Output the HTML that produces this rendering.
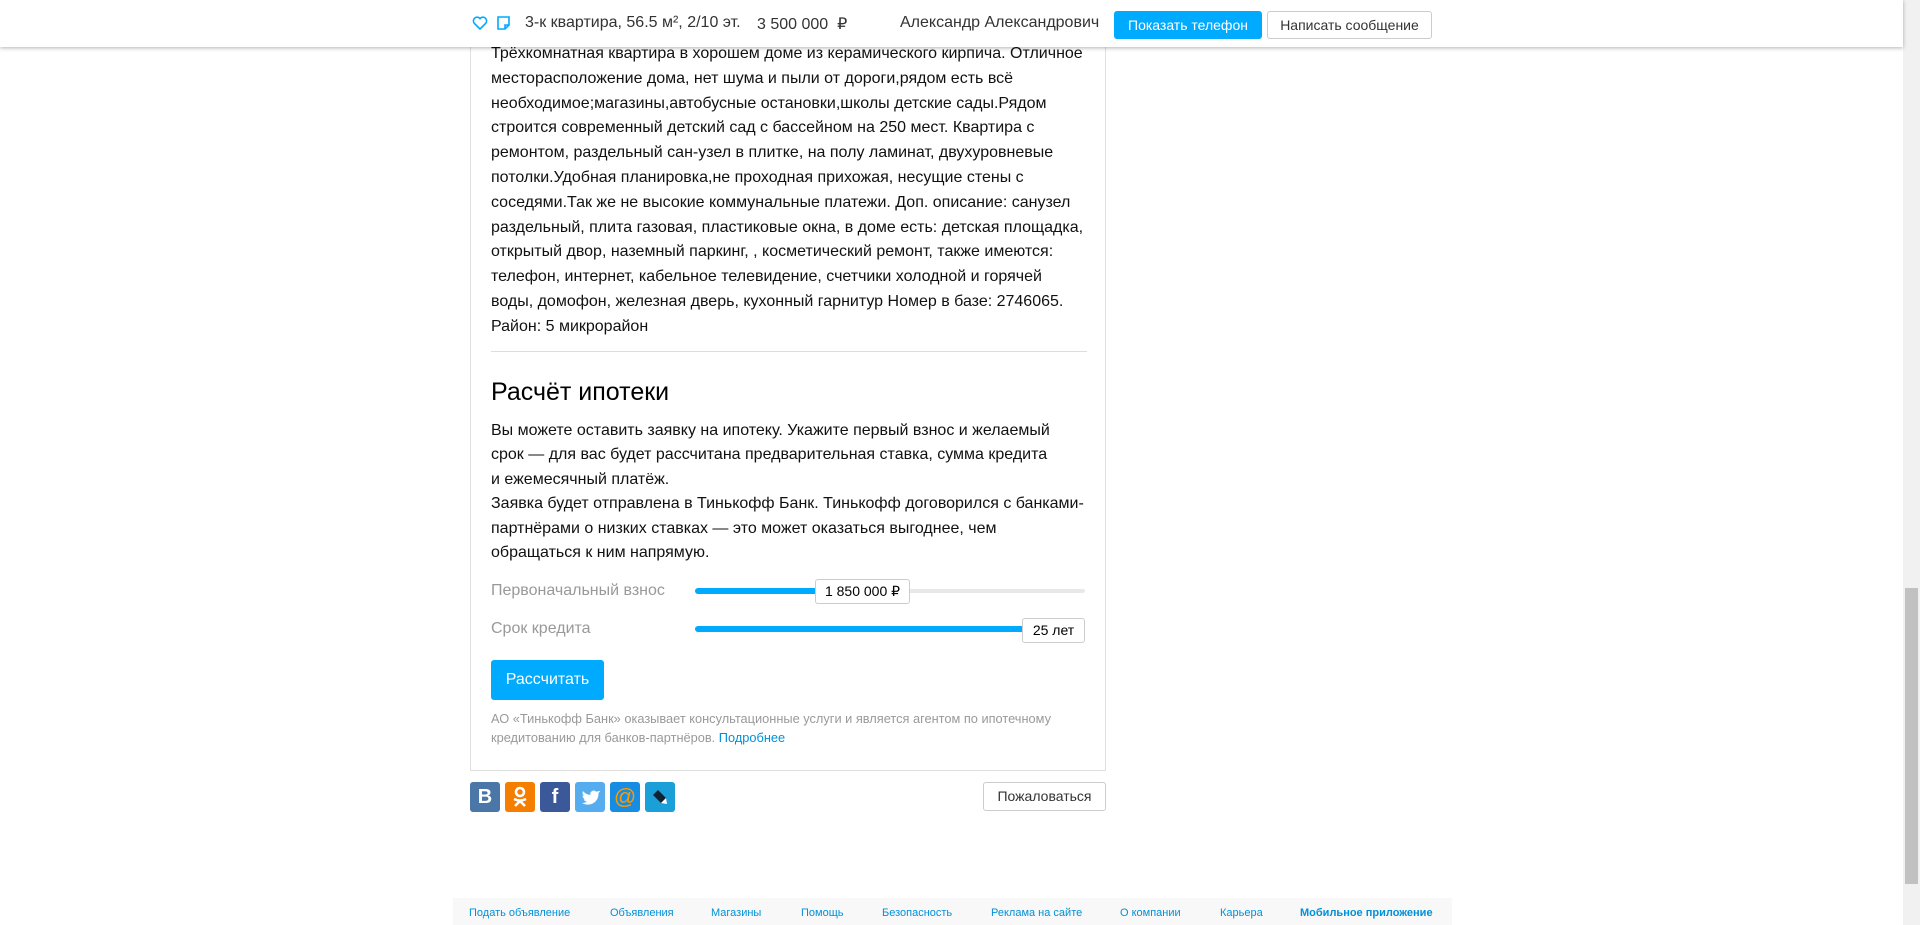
<!DOCTYPE html>
<html><head><meta charset="utf-8">
<style>
*{margin:0;padding:0;box-sizing:border-box}
body{width:1920px;height:925px;overflow:hidden;background:#fff;font-family:"Liberation Sans",Arial,sans-serif;color:#000;position:relative}
.hdr{position:absolute;left:0;top:0;width:1903px;height:47px;background:#fff;box-shadow:0 1px 4px rgba(0,0,0,.3);z-index:5}
.hdr span{position:absolute;top:14px;font-size:16px;color:#333}
.btn{position:absolute;font-size:14px;text-align:center;border-radius:3px}
.card{position:absolute;left:470px;top:0;width:636px;height:771px;border:1px solid #e0e0e0;border-top:none}
.desc{position:absolute;left:20px;top:42px;white-space:nowrap;font-size:16px;line-height:24.8px;color:#111}
.hr{position:absolute;left:20px;top:351px;width:596px;height:1px;background:#ddd}
h2{position:absolute;left:20px;top:378px;font-size:25px;font-weight:normal}
.p{position:absolute;left:20px;top:419px;width:600px;font-size:16px;line-height:24.4px;color:#111}
.lab{position:absolute;left:20px;font-size:16px;color:#999}
.trk{position:absolute;left:224px;width:390px;height:4px;background:#e8e8e8;border-radius:2px}
.fill{position:absolute;left:0;top:-1px;height:6px;background:#0af;border-radius:3px}
.box{position:absolute;background:#fff;border:1px solid #ccc;border-radius:3px;font-size:14px;text-align:center;line-height:23px}
.soc{position:absolute;top:782px;width:30px;height:30px;border-radius:3px;color:#fff;font-weight:bold;text-align:center;line-height:30px;font-size:20px}
.foot{position:absolute;left:453px;top:898px;width:999px;height:27px;background:#f8f8f8}
.foot a{position:absolute;top:9px;font-size:11px;color:#0091d9;text-decoration:none}
</style></head><body>
<div class="hdr">
<svg style="position:absolute;left:472px;top:15px" width="16" height="16" viewBox="0 0 16 16"><path d="M8 14L2.2 8.2A3.3 3.3 0 0 1 8 3.6a3.3 3.3 0 0 1 5.8 4.6z" fill="none" stroke="#0af" stroke-width="1.6"/></svg>
<svg style="position:absolute;left:496px;top:15px" width="15" height="16" viewBox="0 0 15 16"><path d="M2 2h11v8l-4 4H2z M9 14v-4h4" fill="none" stroke="#0af" stroke-width="1.6"/></svg>
<span style="left:525px">3-к квартира, 56.5 м², 2/10 эт.</span>
<span style="left:757px">3 500 000 &nbsp;₽</span>
<span style="left:900px">Александр Александрович</span>
<div class="btn" style="left:1114px;top:11px;width:148px;height:28px;background:#0af;color:#fff;line-height:28px">Показать телефон</div>
<div class="btn" style="left:1267px;top:11px;width:165px;height:28px;border:1px solid #ccc;color:#333;line-height:26px">Написать сообщение</div>
</div>
<div class="card">
<div class="desc">Трёхкомнатная квартира в хорошем доме из керамического кирпича. Отличное<br>месторасположение дома, нет шума и пыли от дороги,рядом есть всё<br>необходимое;магазины,автобусные остановки,школы детские сады.Рядом<br>строится современный детский сад с бассейном на 250 мест. Квартира с<br>ремонтом, раздельный сан-узел в плитке, на полу ламинат, двухуровневые<br>потолки.Удобная планировка,не проходная прихожая, несущие стены с<br>соседями.Так же не высокие коммунальные платежи. Доп. описание: санузел<br>раздельный, плита газовая, пластиковые окна, в доме есть: детская площадка,<br>открытый двор, наземный паркинг, , косметический ремонт, также имеются:<br>телефон, интернет, кабельное телевидение, счетчики холодной и горячей<br>воды, домофон, железная дверь, кухонный гарнитур Номер в базе: 2746065.<br>Район: 5 микрорайон</div>
<div class="hr"></div>
<h2>Расчёт ипотеки</h2>
<div class="p">Вы можете оставить заявку на ипотеку. Укажите первый взнос и желаемый<br>срок — для вас будет рассчитана предварительная ставка, сумма кредита<br>и ежемесячный платёж.<br>Заявка будет отправлена в Тинькофф Банк. Тинькофф договорился с банками-<br>партнёрами о низких ставках — это может оказаться выгоднее, чем<br>обращаться к ним напрямую.</div>
<div class="lab" style="top:582px">Первоначальный взнос</div>
<div class="trk" style="top:589px"><div class="fill" style="width:125px"></div></div>
<div class="box" style="left:344px;top:579px;width:95px;height:25px">1 850 000 ₽</div>
<div class="lab" style="top:620px">Срок кредита</div>
<div class="trk" style="top:627px"><div class="fill" style="width:340px"></div></div>
<div class="box" style="left:551px;top:618px;width:63px;height:25px">25 лет</div>
<div class="btn" style="left:20px;top:660px;width:113px;height:40px;background:#0af;color:#fff;font-size:16px;line-height:40px">Рассчитать</div>
<div style="position:absolute;left:20px;top:709px;font-size:12.8px;line-height:19px;color:#999">АО «Тинькофф Банк» оказывает консультационные услуги и является агентом по ипотечному<br>кредитованию для банков-партнёров. <span style="color:#0091d9">Подробнее</span></div>
</div>
<div class="soc" style="left:470px;background:#4a76a8">B</div>
<div class="soc" style="left:505px;background:#f57d00"><svg width="30" height="30" viewBox="0 0 30 30"><circle cx="15" cy="10" r="4" fill="none" stroke="#fff" stroke-width="2.6"/><path d="M9 17q6 3 12 0M15 19l-5 5M15 19l5 5" stroke="#fff" stroke-width="2.6" fill="none"/></svg></div>
<div class="soc" style="left:540px;background:#3b5998">f</div>
<div class="soc" style="left:575px;background:#55acee"><svg width="30" height="30" viewBox="0 0 30 30"><path d="M24 9c-1 .5-2 .6-2.6.7a3.5 3.5 0 0 0-6 3.2C12 12.7 9.5 11 8 9c-1 2-.3 4 1.1 5-.6 0-1.1-.2-1.6-.4 0 1.8 1.2 3.2 2.8 3.5-.5.2-1.1.2-1.6.1.5 1.4 1.8 2.4 3.3 2.4A7 7 0 0 1 7 21c8 4.5 17-1 16.5-10 .6-.5 1.2-1.1 1.5-2z" fill="#fff"/></svg></div>
<div class="soc" style="left:610px;background:#168de2;color:#f90;font-weight:normal;font-size:22px">@</div>
<div class="soc" style="left:645px;background:#1a9fd8"><svg width="30" height="30" viewBox="0 0 30 30"><path d="M8 13l5-5 8 8-5 5z" fill="#123"/><path d="M16 21l5-5 1 6z" fill="#fff"/></svg></div>
<div class="btn" style="left:983px;top:782px;width:123px;height:29px;border:1px solid #ccc;color:#333;line-height:27px">Пожаловаться</div>
<div class="foot">
<a style="left:16px">Подать объявление</a><a style="left:157px">Объявления</a><a style="left:258px">Магазины</a><a style="left:348px">Помощь</a><a style="left:429px">Безопасность</a><a style="left:538px">Реклама на сайте</a><a style="left:667px">О компании</a><a style="left:767px">Карьера</a><a style="left:847px;font-weight:bold">Мобильное приложение</a>
</div>
<div style="position:absolute;left:1903px;top:0;width:17px;height:925px;background:#f1f1f1"></div>
<div style="position:absolute;left:1905px;top:588px;width:13px;height:296px;background:#c1c1c1"></div>
</body></html>
